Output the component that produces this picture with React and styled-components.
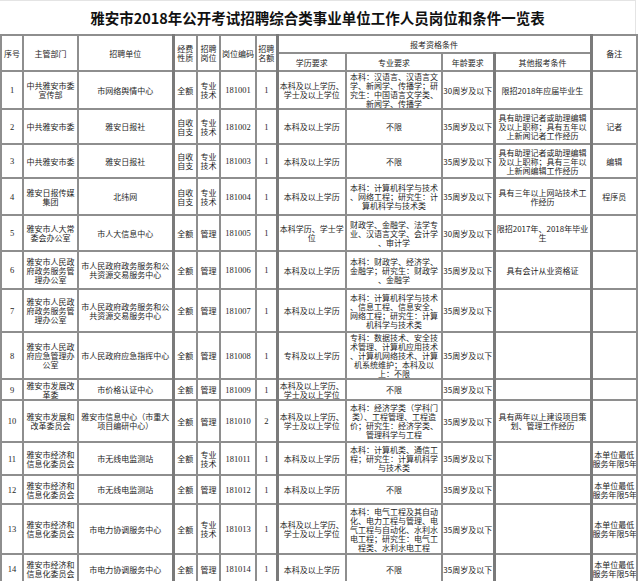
import React from "react";
import styled, { createGlobalStyle } from "styled-components";

const GlobalStyle = createGlobalStyle`
  html, body {
    margin: 0;
    padding: 0;
    background: #fff;
  }
  body {
    font-family: "Noto Sans CJK SC", "Liberation Sans", sans-serif;
    color: #222;
  }
`;

const Page = styled.div`
  width: 640px;
`;

const TitleBar = styled.div`
  width: 636px;
  height: 34px;
  box-sizing: border-box;
  border-top: 1px solid #e4e4e4;
  border-right: 1px solid #e4e4e4;
  display: flex;
  align-items: center;
  justify-content: center;
`;

const Title = styled.h1`
  margin: 0;
  font-size: 14.5px;
  font-weight: 700;
  color: #111;
`;

const Table = styled.table`
  border-collapse: collapse;
  table-layout: fixed;
  width: 636px;
`;

const Row = styled.tr`
  height: ${(p) => p.$h}px;
`;

const Cell = styled.td`
  border: 2px solid #8e8e8e;
  border-left-width: ${(p) => (p.$thick ? 3 : 2)}px;
  border-left-color: ${(p) => (p.$thick ? "#7a7a7a" : "#8e8e8e")};
  padding: 0;
  font-size: 8px;
  line-height: 9px;
  font-weight: 400;
  text-align: center;
  vertical-align: middle;
  white-space: nowrap;
  overflow: hidden;
  color: #1e1e1e;
`;

const Line = styled.span`
  display: block;
`;

const Num = styled.span`
  font-family: "Liberation Serif", serif;
  font-size: 8.5px;
`;

// column widths, and which ones get a heavier left rule
const cols = [22, 55, 95, 24, 23, 36, 21, 69, 96, 52, 97, 46];
const thick = [false, false, false, true, false, false, false, true, false, false, true, true];

const rows = [
  ["1", "中共雅安市委|宣传部", "市网络舆情中心", "全额", "专业|技术", "181001", "1", "本科及以上学历、|学士及以上学位", "本科：汉语言、汉语言文|学、新闻学、传播学；研|究生：中国语言文学类、|新闻学、传播学", "30周岁及以下", "限招2018年应届毕业生", "", 37],
  ["2", "中共雅安市委", "雅安日报社", "自收|自支", "专业|技术", "181002", "1", "本科及以上学历", "不限", "35周岁及以下", "具有助理记者或助理编辑|及以上职称；具有五年以|上新闻记者工作经历", "记者", 35],
  ["3", "中共雅安市委", "雅安日报社", "自收|自支", "专业|技术", "181003", "1", "本科及以上学历", "不限", "35周岁及以下", "具有助理记者或助理编辑|及以上职称；具有三年以|上新闻编辑工作经历", "编辑", 34],
  ["4", "雅安日报传媒|集团", "北纬网", "自收|自支", "专业|技术", "181004", "1", "本科及以上学历", "本科：计算机科学与技术|、网络工程；研究生：计|算机科学与技术类", "35周岁及以下", "具有三年以上网站技术工|作经历", "程序员", 37],
  ["5", "雅安市人大常|委会办公室", "市人大信息中心", "全额", "管理", "181005", "1", "本科学历、学士学|位", "财政学、金融学、法学专|业、汉语言文学、会计学|、审计学", "30周岁及以下", "限招2017年、2018年毕业|生", "", 36],
  ["6", "雅安市人民政|府政务服务管|理办公室", "市人民政府政务服务和公|共资源交易服务中心", "全额", "管理", "181006", "1", "本科及以上学历", "本科：财政学、经济学、|金融学；研究生：财政学|、金融学", "35周岁及以下", "具有会计从业资格证", "", 38],
  ["7", "雅安市人民政|府政务服务管|理办公室", "市人民政府政务服务和公|共资源交易服务中心", "全额", "管理", "181007", "1", "本科及以上学历", "本科：计算机科学与技术|、信息工程、信息安全、|网络工程；研究生：计算|机科学与技术类", "35周岁及以下", "", "", 43],
  ["8", "雅安市人民政|府应急管理办|公室", "市人民政府应急指挥中心", "全额", "管理", "181008", "1", "专科及以上学历", "专科：数据技术、安全技|术管理、计算机应用技术|、计算机网络技术、计算|机系统维护；本科及以|上：不限", "35周岁及以下", "", "", 47],
  ["9", "雅安市发展改|革委", "市价格认证中心", "全额", "管理", "181009", "1", "本科及以上学历、|学士及以上学位", "不限", "35周岁及以下", "", "", 21],
  ["10", "雅安市发展和|改革委员会", "雅安市信息中心（市重大|项目编研中心）", "全额", "管理", "181010", "2", "本科及以上学历、|学士及以上学位", "本科：经济学类（学科门|类）、工程管理、工程造|价；研究生：经济学类、|管理科学与工程", "35周岁及以下", "具有两年以上建设项目策|划、管理工作经历", "", 42],
  ["11", "雅安市经济和|信息化委员会", "市无线电监测站", "全额", "专业|技术", "181011", "1", "本科及以上学历", "本科：计算机类、通信工|程；研究生：计算机科学|与技术类", "35周岁及以下", "", "本单位最低|服务年限5年", 33],
  ["12", "雅安市经济和|信息化委员会", "市无线电监测站", "全额", "管理", "181012", "1", "本科及以上学历", "不限", "35周岁及以下", "", "本单位最低|服务年限5年", 29],
  ["13", "雅安市经济和|信息化委员会", "市电力协调服务中心", "全额", "专业|技术", "181013", "1", "本科及以上学历、|学士及以上学位", "本科：电气工程及其自动|化、电力工程与管理、电|气工程与自动化、水利水|电工程；研究生：电气工|程类、水利水电工程", "35周岁及以下", "", "本单位最低|服务年限5年", 50],
  ["14", "雅安市经济和|信息化委员会", "市电力协调服务中心", "全额", "管理", "181014", "1", "本科及以上学历", "不限", "35周岁及以下", "", "本单位最低|服务年限5年", 30],
];

const Lines = ({ text }) =>
  text.split("|").map((t, i) => <Line key={i}>{t}</Line>);

export default function App() {
  return (
    <Page>
      <GlobalStyle />
      <TitleBar>
        <Title>雅安市2018年公开考试招聘综合类事业单位工作人员岗位和条件一览表</Title>
      </TitleBar>
      <Table>
        <colgroup>
          {cols.map((w, i) => (
            <col key={i} style={{ width: w }} />
          ))}
        </colgroup>
        <thead>
          <Row $h={18}>
            <Cell as="th" rowSpan={2}>序号</Cell>
            <Cell as="th" rowSpan={2}>主管部门</Cell>
            <Cell as="th" rowSpan={2}>招聘单位</Cell>
            <Cell as="th" rowSpan={2} $thick>
              <Lines text="经费|性质" />
            </Cell>
            <Cell as="th" rowSpan={2}>
              <Lines text="招聘|岗位" />
            </Cell>
            <Cell as="th" rowSpan={2}>岗位编码</Cell>
            <Cell as="th" rowSpan={2}>
              <Lines text="招聘|名额" />
            </Cell>
            <Cell as="th" colSpan={4} $thick>报考资格条件</Cell>
            <Cell as="th" rowSpan={2} $thick>备注</Cell>
          </Row>
          <Row $h={18}>
            <Cell as="th" $thick>学历要求</Cell>
            <Cell as="th">专业要求</Cell>
            <Cell as="th">年龄要求</Cell>
            <Cell as="th" $thick>其他报考条件</Cell>
          </Row>
        </thead>
        <tbody>
          {rows.map((r) => (
            <Row key={r[0]} $h={r[12]}>
              {r.slice(0, 12).map((v, i) => (
                <Cell key={i} $thick={thick[i]}>
                  {i === 5 || i === 6 || i === 0 ? <Num>{v}</Num> : <Lines text={v} />}
                </Cell>
              ))}
            </Row>
          ))}
        </tbody>
      </Table>
    </Page>
  );
}
